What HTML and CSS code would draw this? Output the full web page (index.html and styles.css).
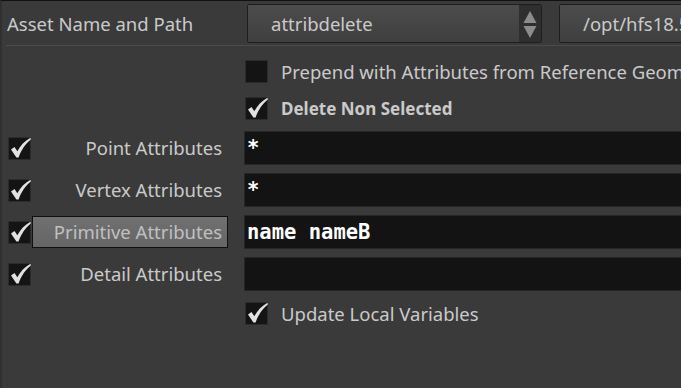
FILE: index.html
```html
<!DOCTYPE html>
<html lang="en">
<head>
  <meta charset="UTF-8">
  <title>attribdelete parameters</title>
  <link rel="stylesheet" href="styles.css">
</head>
<body>
  <div class="pane">
    <div class="header">
      <div class="header-label">Asset Name and Path</div>
      <div class="menu-btn">
        <span class="menu-text">attribdelete</span>
        <span class="menu-arrows">
          <svg width="14" height="30" viewBox="0 0 14 30">
            <polygon points="7,3 13.5,15 0.5,15" fill="#8c8c8c"/>
            <polygon points="0.5,18 13.5,18 7,30" fill="#8c8c8c"/>
          </svg>
        </span>
      </div>
      <div class="path-btn">/opt/hfs18.5/houdini/otls/OPlibSop.hda</div>
    </div>

    <div class="params">
      <div class="cell-empty"></div>
      <div class="cell-empty"></div>
      <label class="toggle">
        <span class="check"></span>
        <span class="toggle-text">Prepend with Attributes from Reference Geometry</span>
      </label>

      <div class="cell-empty"></div>
      <div class="cell-empty"></div>
      <label class="toggle">
        <span class="check on">
          <svg viewBox="0 0 23 23"><path d="M3 12.5 L6.5 10 L9.3 14.2 C12.5 8.5 16.5 4.2 22.5 0.8 L22.8 2.6 C17.5 7 13.5 12.5 10.6 20.5 L8.4 20.5 Z"/></svg>
        </span>
        <span class="toggle-text bold">Delete Non Selected</span>
      </label>

      <span class="check on">
        <svg viewBox="0 0 23 23"><path d="M3 12.5 L6.5 10 L9.3 14.2 C12.5 8.5 16.5 4.2 22.5 0.8 L22.8 2.6 C17.5 7 13.5 12.5 10.6 20.5 L8.4 20.5 Z"/></svg>
      </span>
      <div class="label">Point Attributes</div>
      <div class="field">*</div>

      <span class="check on">
        <svg viewBox="0 0 23 23"><path d="M3 12.5 L6.5 10 L9.3 14.2 C12.5 8.5 16.5 4.2 22.5 0.8 L22.8 2.6 C17.5 7 13.5 12.5 10.6 20.5 L8.4 20.5 Z"/></svg>
      </span>
      <div class="label">Vertex Attributes</div>
      <div class="field">*</div>

      <span class="check on">
        <svg viewBox="0 0 23 23"><path d="M3 12.5 L6.5 10 L9.3 14.2 C12.5 8.5 16.5 4.2 22.5 0.8 L22.8 2.6 C17.5 7 13.5 12.5 10.6 20.5 L8.4 20.5 Z"/></svg>
      </span>
      <div class="label active">Primitive Attributes</div>
      <div class="field">name nameB</div>

      <span class="check on">
        <svg viewBox="0 0 23 23"><path d="M3 12.5 L6.5 10 L9.3 14.2 C12.5 8.5 16.5 4.2 22.5 0.8 L22.8 2.6 C17.5 7 13.5 12.5 10.6 20.5 L8.4 20.5 Z"/></svg>
      </span>
      <div class="label">Detail Attributes</div>
      <div class="field"></div>

      <div class="cell-empty"></div>
      <div class="cell-empty"></div>
      <label class="toggle">
        <span class="check on">
          <svg viewBox="0 0 23 23"><path d="M3 12.5 L6.5 10 L9.3 14.2 C12.5 8.5 16.5 4.2 22.5 0.8 L22.8 2.6 C17.5 7 13.5 12.5 10.6 20.5 L8.4 20.5 Z"/></svg>
        </span>
        <span class="toggle-text">Update Local Variables</span>
      </label>
    </div>
  </div>
</body>
</html>
```

FILE: styles.css
```css
* {
  box-sizing: border-box;
  margin: 0;
  padding: 0;
}

body {
  background: #3a3a3a;
  width: 681px;
  height: 388px;
  overflow: hidden;
  font-family: "Noto Sans", sans-serif;
  font-size: 18.5px;
  color: #cacaca;
}

.pane {
  height: 388px;
  border-top: 1px solid #111;
  border-left: 2px solid #303030;
}

/* header row */
.header {
  display: flex;
  align-items: center;
  height: 45px;
  margin-left: 4px;
  border-bottom: 1px solid #4b4b4b;
  white-space: nowrap;
}

.header-label {
  flex-shrink: 0;
  width: 241px;
  padding-left: 1px;
}

.menu-btn {
  flex-shrink: 0;
  display: flex;
  align-items: stretch;
  width: 295px;
  height: 39px;
  border: 1px solid #1e1e1e;
  border-radius: 2px;
  background: linear-gradient(#4c4c4c, #3f3f3f);
  overflow: hidden;
}

.menu-text {
  flex: 1;
  padding-left: 23px;
  line-height: 37px;
}

.menu-arrows {
  width: 22px;
  background: #2f2f2f;
  display: flex;
  align-items: center;
  justify-content: center;
}

.path-btn {
  flex-shrink: 0;
  margin-left: 17px;
  width: 420px;
  height: 39px;
  line-height: 37px;
  padding-left: 23px;
  border: 1px solid #1e1e1e;
  border-radius: 2px;
  background: linear-gradient(#4c4c4c, #3f3f3f);
}

/* parameter grid */
.params {
  display: grid;
  grid-template-columns: 23px 196px 1fr;
  grid-template-rows: 37px 37px 42px 42px 42px 42px 37px;
  column-gap: 1px;
  align-items: center;
  padding: 7px 0 0 6px;
}

.check {
  display: block;
  flex-shrink: 0;
  width: 23px;
  height: 23px;
  background: #141414;
  border: 1px solid #2c2c2c;
  position: relative;
}

.check svg {
  position: absolute;
  left: -1px;
  top: -1px;
  width: 23px;
  height: 23px;
  fill: #e2e2e2;
}

.label {
  height: 32px;
  line-height: 30px;
  text-align: right;
  padding-right: 5px;
  border: 1px solid transparent;
  white-space: nowrap;
}

.label.active {
  background: linear-gradient(#707070, #666);
  border-color: #101010;
  color: #c0c0c0;
}

.field {
  height: 34px;
  margin-left: 15px;
  background: #131313;
  border: 1px solid #262626;
  border-right: none;
  color: #fff;
  font-family: "DejaVu Sans Mono", monospace;
  font-weight: bold;
  font-size: 20.5px;
  line-height: 32px;
  padding-left: 2px;
}

.toggle {
  display: flex;
  align-items: center;
  margin-left: 16px;
  white-space: nowrap;
  overflow: hidden;
}

.toggle-text {
  margin-left: 13px;
}

.toggle-text.bold {
  font-weight: bold;
  font-size: 17px;
}
```
